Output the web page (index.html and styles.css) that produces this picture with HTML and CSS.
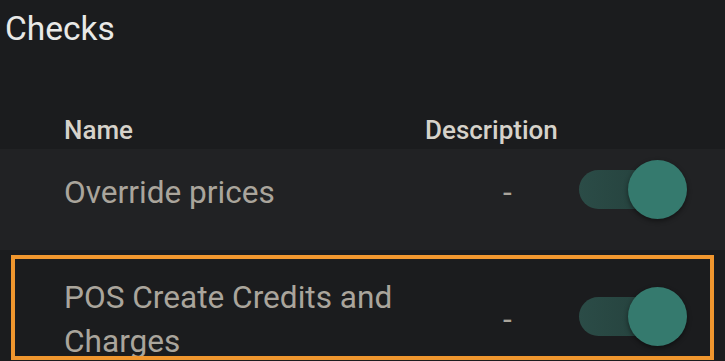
FILE: index.html
```html
<!DOCTYPE html>
<html lang="en">
<head>
  <meta charset="UTF-8">
  <meta name="viewport" content="width=device-width, initial-scale=1.0">
  <title>Checks</title>
  <link rel="stylesheet" href="styles.css">
</head>
<body>
  <h1 class="title">Checks</h1>

  <div class="checks-table">
    <div class="row head">
      <div class="cell name">Name</div>
      <div class="cell desc">Description</div>
      <div class="cell"></div>
    </div>
    <div class="row item striped">
      <div class="cell name">Override prices</div>
      <div class="cell desc dash">-</div>
      <div class="cell">
        <div class="switch on"><span class="track"></span><span class="knob"></span></div>
      </div>
    </div>
    <div class="row item tall">
      <div class="cell name">POS Create Credits and Charges</div>
      <div class="cell desc dash">-</div>
      <div class="cell">
        <div class="switch on"><span class="track"></span><span class="knob"></span></div>
      </div>
    </div>
  </div>

  <div class="highlight"></div>
</body>
</html>
```

FILE: styles.css
```css
body {
  margin: 0;
  background-color: #1b1c1e;
  font-family: 'Roboto', 'Noto Sans', sans-serif;
  height: 361px;
  overflow: hidden;
  position: relative;
}
.title {
  margin: 0;
  padding: 9px 5px 0;
  height: 40px;
  font-size: 33.5px;
  line-height: 40px;
  font-weight: 400;
  color: #e9e9e7;
}
.checks-table {
  height: 312px;
  overflow: hidden;
}
.row {
  display: grid;
  grid-template-columns: 361px 154px 1fr;
  padding-left: 64px;
  box-sizing: border-box;
}
.row.head {
  padding-top: 66px;
  padding-bottom: 4px;
  font-size: 26px;
  line-height: 30px;
  font-weight: 500;
  color: #d6d2ca;
}
.row.item {
  align-items: center;
  padding-bottom: 14px;
  height: 101px;
  font-size: 31.6px;
  line-height: 44px;
  color: #aaa59c;
}
.row.striped {
  background-color: #212224;
}
.row.tall {
  height: 153px;
}
.dash {
  padding-left: 78px;
}
.switch {
  position: relative;
  width: 110px;
  height: 59px;
  margin-bottom: 6px;
}
.switch .track {
  position: absolute;
  left: 0;
  top: 10px;
  width: 100px;
  height: 39px;
  border-radius: 20px;
  background: linear-gradient(to right, #2b4c47, #233d39);
}
.switch .knob {
  position: absolute;
  left: 49px;
  top: 0;
  width: 59px;
  height: 59px;
  border-radius: 50%;
  background-color: #357a6e;
  box-shadow: 0 2px 5px rgba(0, 0, 0, 0.45);
}
.highlight {
  position: absolute;
  left: 11px;
  top: 255px;
  width: 695px;
  height: 97px;
  border: 4px solid #f0962e;
}
```
